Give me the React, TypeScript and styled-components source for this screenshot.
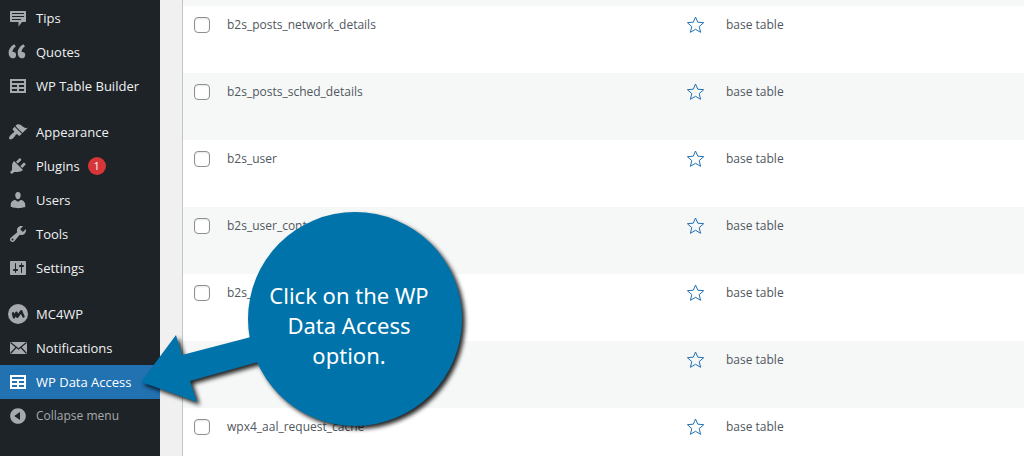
import React from "react";
import styled, { createGlobalStyle, css } from "styled-components";

const GlobalStyle = createGlobalStyle`
  *, *::before, *::after { box-sizing: border-box; }
  body {
    margin: 0;
    background: #f0f0f1;
    color: #50575e;
    font-family: "Open Sans", "Noto Sans", sans-serif;
    font-size: 12px;
  }
`;

const Shell = styled.div`
  position: relative;
  display: flex;
  height: 100vh;
  overflow: hidden;
`;

const Sidebar = styled.nav`
  flex: 0 0 160px;
  padding-top: 1px;
  background: #1d2327;
`;

const MenuGroup = styled.ul`
  margin: 0 0 12px;
  padding: 0;
  list-style: none;
`;

const menuItem = css`
  display: flex;
  align-items: center;
  gap: 8px;
  width: 100%;
  height: 34px;
  padding: 0 8px;
  border: 0;
  font: inherit;
  font-size: 13px;
  line-height: 18px;
  text-align: left;
  text-decoration: none;
  white-space: nowrap;
`;

const MenuLink = styled.a<{ $active?: boolean }>`
  ${menuItem}
  background: ${(p) => (p.$active ? "#2271b1" : "transparent")};
  color: ${(p) => (p.$active ? "#fff" : "#f0f0f1")};

  svg { color: ${(p) => (p.$active ? "#fff" : "#a7aaad")}; }
`;

const CollapseButton = styled.button`
  ${menuItem}
  background: transparent;
  color: #a7aaad;
  font-size: 12px;
  cursor: pointer;
`;

const MenuIcon = styled.svg`
  flex: none;
  width: 20px;
  height: 20px;
  fill: currentColor;
`;

const CountBadge = styled.span`
  width: 18px;
  height: 18px;
  border-radius: 9px;
  background: #d63638;
  color: #fff;
  font-size: 11px;
  line-height: 18px;
  text-align: center;
`;

const Content = styled.main`
  flex: 1;
  min-width: 0;
  margin-left: 22px;
  border-left: 1px solid #c3c4c7;
  background: #f6f7f7;
  padding-top: 6px;
`;

const DataTable = styled.table`
  width: 100%;
  border-collapse: collapse;
  table-layout: fixed;
`;

const Row = styled.tr`
  height: 67px;
  background: #f6f7f7;

  &:nth-child(odd) { background: #fff; }
`;

const Cell = styled.td<{ $width?: number }>`
  width: ${(p) => (p.$width ? `${p.$width}px` : "auto")};
  padding: 10px 0 0;
  vertical-align: top;
  line-height: 18px;
`;

const CheckCell = styled(Cell)`
  padding: 11px 0 0 11px;
`;

const Checkbox = styled.input`
  display: block;
  appearance: none;
  width: 16px;
  height: 16px;
  margin: 0;
  border: 1px solid #8c8f94;
  border-radius: 4px;
  background: #fff;
  box-shadow: inset 0 1px 2px rgba(0, 0, 0, 0.1);
`;

const StarButton = styled.button`
  display: block;
  padding: 0;
  border: 0;
  background: none;
  color: #2271b1;
  cursor: pointer;
`;

const StarIcon = styled.svg`
  display: block;
  width: 18px;
  height: 18px;
  fill: none;
  stroke: currentColor;
`;

const Callout = styled.aside`
  position: absolute;
  left: 136px;
  top: 208px;
  width: 336px;
  height: 228px;
`;

const CalloutShape = styled.svg`
  display: block;
  width: 336px;
  height: 228px;
  fill: #0073aa;
  filter: drop-shadow(3px 3px 2px rgba(0, 0, 0, 0.85));
`;

const CalloutText = styled.p`
  position: absolute;
  top: 72px;
  right: 37px;
  width: 172px;
  margin: 0;
  color: #fff;
  font-family: "Noto Sans", "Open Sans", sans-serif;
  font-size: 22px;
  line-height: 30px;
  text-align: center;
`;

const icons = {
  tips: (
    <path
      fillRule="evenodd"
      d="M3 3h14c.6 0 1 .4 1 1v9c0 .6-.4 1-1 1h-3l-3.500 4.500V14H3c-.6 0-1-.4-1-1V4c0-.6.4-1 1-1zm1 2v1h12V5zm0 3v1h12V8zm0 3v1h9v-1z"
    />
  ),
  quote: (
    <path
      transform="translate(-2.600 -2.400) scale(1.130 1.170)"
      d="M9.49 13.22c0-.74-.2-1.38-.61-1.9-.62-.78-1.83-.88-2.53-.72-.29-1.65 1.11-3.75 2.92-4.65L7.88 4c-2.73 1.3-5.42 4.28-4.96 8.05C3.21 14.43 4.59 16 6.54 16c.85 0 1.56-.25 2.12-.75s.83-1.18.83-2.03zm8.05 0c0-.74-.2-1.38-.61-1.9-.63-.78-1.83-.88-2.53-.72-.29-1.65 1.11-3.75 2.92-4.65L15.93 4c-2.73 1.3-5.41 4.28-4.95 8.05.29 2.38 1.66 3.95 3.61 3.95.85 0 1.56-.25 2.12-.75s.83-1.18.83-2.03z"
    />
  ),
  table: (
    <path d="M18 17V3H2v14h16zM16 7H4V5h12v2zm-7 4H4V9h5v2zm7 0h-5V9h5v2zm-7 4H4v-2h5v2zm7 0h-5v-2h5v2z" fillRule="evenodd" />
  ),
  appearance: (
    <path d="M14.48 11.06L7.41 3.99l1.5-1.5c.5-.56 2.3-.47 3.51.32 1.21.8 1.43 1.28 2.91 2.1 1.18.64 2.45 1.26 4.45.85zm-.71.71L6.7 4.7 4.93 6.47c-.39.39-.39 1.02 0 1.41l1.06 1.06c.39.39.39 1.03 0 1.42-.6.6-1.43 1.11-2.21 1.69-.35.26-.7.53-1.01.84C1.43 14.23.4 16.08 1.4 17.07c.99 1 2.84-.03 4.18-1.36.31-.31.58-.66.85-1.02.57-.78 1.08-1.61 1.69-2.21.39-.39 1.02-.39 1.41 0l1.06 1.06c.39.39 1.02.39 1.41 0z" />
  ),
  plugins: (
    <path d="M13.11 4.36L9.87 7.6 8 5.73l3.24-3.24c.35-.34 1.05-.2 1.56.32.52.51.66 1.21.31 1.55zm-8 1.77l.91-1.12 9.01 9.01-1.19.84c-.71.71-2.63 1.16-3.82 1.16H6.14L4.9 17.26c-.59.59-1.54.59-2.12 0-.59-.58-.59-1.53 0-2.12l1.24-1.24v-3.88c0-1.13.4-3.19 1.09-3.89zm7.26 3.97l3.24-3.24c.34-.35 1.04-.21 1.55.31.52.51.66 1.21.31 1.55l-3.24 3.25z" />
  ),
  users: (
    <path d="M10 9.25c-2.27 0-2.73-3.44-2.73-3.44C7 4.02 7.82 2 9.97 2c2.16 0 2.98 2.02 2.71 3.81 0 0-.41 3.44-2.68 3.44zm0 2.57L12.72 10c2.39 0 4.52 2.33 4.52 4.53v2.49s-3.65 1.13-7.24 1.13c-3.65 0-7.24-1.13-7.24-1.13v-2.49c0-2.25 1.94-4.48 4.47-4.48z" />
  ),
  tools: (
    <path d="M16.68 9.77c-1.34 1.34-3.3 1.67-4.95.99l-5.41 6.52c-.99.99-2.59.99-3.58 0s-.99-2.59 0-3.57l6.52-5.42c-.68-1.65-.35-3.61.99-4.95 1.28-1.28 3.12-1.62 4.72-1.06l-2.89 2.89 2.82 2.82 2.86-2.87c.53 1.58.18 3.39-1.08 4.65zM3.81 16.21c.4.39 1.04.39 1.43 0 .4-.4.4-1.04 0-1.43-.39-.4-1.03-.4-1.43 0-.39.39-.39 1.03 0 1.43z" />
  ),
  settings: (
    <path d="M18 16V4c0-.55-.45-1-1-1H3c-.55 0-1 .45-1 1v12c0 .55.45 1 1 1h14c.55 0 1-.45 1-1zM8 11h1c.55 0 1 .45 1 1s-.45 1-1 1H8v1.5c0 .28-.22.5-.5.5s-.5-.22-.5-.5V13H6c-.55 0-1-.45-1-1s.45-1 1-1h1V5.5c0-.28.22-.5.5-.5s.5.22.5.5V11zm5-2h-1c-.55 0-1-.45-1-1s.45-1 1-1h1V5.5c0-.28.22-.5.5-.5s.5.22.5.5V7h1c.55 0 1 .45 1 1s-.45 1-1 1h-1v5.5c0 .28-.22.5-.5.5s-.5-.22-.5-.5V9z" />
  ),
  mailchimp: (
    <>
      <circle cx="10" cy="10" r="10" />
      <path
        d="M5 9.3l.9 4 2.600-4.600.8 4.200 4-5.600c.6 2 1.400 3.600 2.200 5.200"
        fill="none"
        stroke="#1d2327"
        strokeWidth="2.4"
        strokeLinejoin="round"
        strokeLinecap="round"
      />
    </>
  ),
  mail: (
    <>
      <path d="M2 4h17v12H2z" />
      <path
        d="M2.500 4.500l8 6.500 8-6.500M2.500 15.500l5.500-6M18.500 15.500l-5.500-6"
        fill="none"
        stroke="#1d2327"
        strokeWidth="1.2"
      />
    </>
  ),
  collapse: (
    <path
      fillRule="evenodd"
      d="M10 2.160c4.330 0 7.840 3.510 7.840 7.840s-3.510 7.840-7.840 7.840S2.160 14.330 2.160 10 5.670 2.160 10 2.160zm2 11.720V6.120L6.180 9.970z"
    />
  ),
};

type IconName = keyof typeof icons;

type MenuEntry = { icon: IconName; label: string; count?: number; active?: boolean };

const menu: MenuEntry[][] = [
  [
    { icon: "tips", label: "Tips" },
    { icon: "quote", label: "Quotes" },
    { icon: "table", label: "WP Table Builder" },
  ],
  [
    { icon: "appearance", label: "Appearance" },
    { icon: "plugins", label: "Plugins", count: 1 },
    { icon: "users", label: "Users" },
    { icon: "tools", label: "Tools" },
    { icon: "settings", label: "Settings" },
  ],
  [
    { icon: "mailchimp", label: "MC4WP" },
    { icon: "mail", label: "Notifications" },
    { icon: "table", label: "WP Data Access", active: true },
  ],
];

const tables = [
  "b2s_posts_network_details",
  "b2s_posts_sched_details",
  "b2s_user",
  "b2s_user_contact",
  "b2s_log",
  "links",
  "wpx4_aal_request_cache",
];

function Icon({ name }: { name: IconName }) {
  return (
    <MenuIcon viewBox="0 0 20 20" aria-hidden="true">
      {icons[name]}
    </MenuIcon>
  );
}

export default function App() {
  return (
    <>
      <GlobalStyle />
      <Shell>
        <Sidebar aria-label="Main menu">
          {menu.map((group, i) => (
            <MenuGroup key={i}>
              {group.map((item) => (
                <li key={item.label}>
                  <MenuLink href="#" $active={item.active} aria-current={item.active ? "page" : undefined}>
                    <Icon name={item.icon} />
                    {item.label}
                    {item.count && <CountBadge>{item.count}</CountBadge>}
                  </MenuLink>
                </li>
              ))}
              {i === menu.length - 1 && (
                <li>
                  <CollapseButton type="button">
                    <Icon name="collapse" />
                    Collapse menu
                  </CollapseButton>
                </li>
              )}
            </MenuGroup>
          ))}
        </Sidebar>
        <Content>
          <DataTable>
            <tbody>
              {tables.map((name) => (
                <Row key={name}>
                  <CheckCell $width={44}>
                    <Checkbox type="checkbox" aria-label={`Select ${name}`} />
                  </CheckCell>
                  <Cell $width={460}>{name}</Cell>
                  <Cell $width={39}>
                    <StarButton type="button" aria-label={`Add ${name} to favourites`}>
                      <StarIcon viewBox="0 0 18 18" aria-hidden="true">
                        <path d="M8.500 1l2.300 5.200 5.900.5-4.500 3.900 1.400 5.700-5.100-3-5.100 3 1.400-5.700L.4 6.700l5.900-.5z" />
                      </StarIcon>
                    </StarButton>
                  </Cell>
                  <Cell>base table</Cell>
                </Row>
              ))}
            </tbody>
          </DataTable>
        </Content>
        <Callout>
          <CalloutShape viewBox="0 0 336 228" aria-hidden="true">
            <circle cx="219" cy="111" r="107" />
            <path d="M5 174L40 127l6 20 69-18 40-10v25l-33 10-68 19 7 21z" />
          </CalloutShape>
          <CalloutText>Click on the WP Data Access option.</CalloutText>
        </Callout>
      </Shell>
    </>
  );
}
